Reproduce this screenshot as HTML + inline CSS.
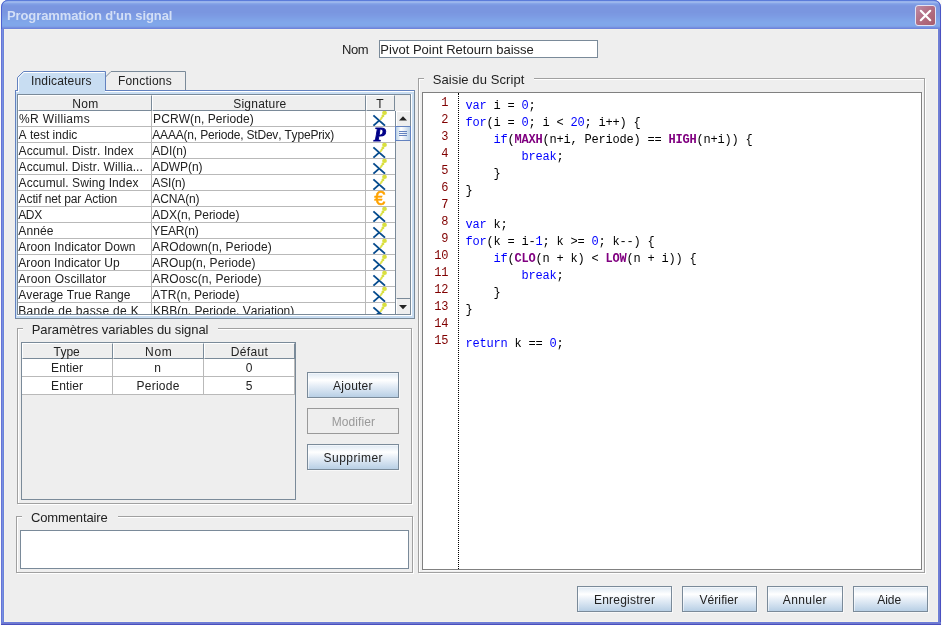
<!DOCTYPE html>
<html lang="fr">
<head>
<meta charset="utf-8">
<title>Programmation d'un signal</title>
<style>
html,body{margin:0;padding:0;}
body{width:942px;height:625px;overflow:hidden;background:#fbfbfb;font-family:"Liberation Sans",sans-serif;font-size:12px;color:#222;position:relative;font-kerning:none;}
.abs{position:absolute;box-sizing:border-box;}
#win{left:1px;top:0;width:940px;height:625px;border-radius:7px 7px 0 0;overflow:hidden;background:linear-gradient(to right,#6673d5 0px,#6673d5 1px,#7791e2 1px,#7791e2 2px,#6c82da 2px,#6c82da 937px,#6f7fd6 937px,#6f7fd6 938px,#6f7cd2 938px,#6f7cd2 939px,#4a50c0 939px);}
#titlebar{left:0;top:0;width:940px;height:29px;background:linear-gradient(to bottom,#5f82dc 0.5px,#98b2ec 1.5px,#9bb6ec 2.5px,#87a5e8 3.5px,#7f9de4 4.5px,#7b98e2 5.5px,#7a96e0 6.5px,#7a96e0 7.5px,#7a96e0 8.5px,#7a96e0 9.5px,#7a96e0 10.5px,#7a96e0 11.5px,#7a96e0 12.5px,#7b98e1 13.5px,#7b99e2 14.5px,#7c9ae3 15.5px,#7d9ce4 16.5px,#7d9ee5 17.5px,#7ea0e6 18.5px,#7fa2e7 19.5px,#7fa4e8 20.5px,#80a5e9 21.5px,#80a7ea 22.5px,#80a7ea 23.5px,#80a7ea 24.5px,#80a6e9 25.5px,#7ea0e6 26.5px,#7691e0 27.5px,#6e85db 28.5px);}
#titlebar{border-radius:7px 7px 0 0;box-shadow:inset 1px 0 0 #4d62cf,inset -1px 0 0 #4a56c6,inset 0 1px 0 #5b7cda;}
#tbl{display:none;}
#tbr{display:none;}
#botb{left:0;top:622px;width:940px;height:3px;background:linear-gradient(to bottom,#6b7cd9 0px,#6b7cd9 1px,#7079cd 1px,#7079cd 2px,#4a4fbf 2px);}
#title{will-change:transform;left:6px;top:8px;color:#d3dff6;font-weight:bold;font-size:13px;line-height:16px;letter-spacing:-0.1px;white-space:nowrap;}
#close{left:914px;top:5px;width:21px;height:21px;border:1px solid #e3e3f4;border-radius:3px;background:linear-gradient(135deg,#bd8ca6 0%,#b36f84 45%,#a85c6c 100%);}
#content{left:3px;top:29px;width:934px;height:593px;background:#eeeeee;border:1px solid #f4f2ea;}
.lbl{white-space:pre;line-height:14px;height:14px;color:#222;}
.l13{font-size:13px;line-height:15px;height:15px;}
.tf{background:#fff;border:1px solid #7a8a99;}
.btn{border:1px solid #7a8a99;background:linear-gradient(to bottom,#dde8f3 0%,#ffffff 30%,#e9f0f8 50%,#b8cfe5 100%);box-shadow:1px 1px 0 #f8f8f8, inset 1px 1px 0 rgba(255,255,255,.55);}
.btn.dis{background:#eeeeee;border-color:#999;box-shadow:none;}
.btn.dis .lbl{color:#999999;}
/* titled (etched) border: dark outer, white inner offset by 1 */
.tb{border:1px solid #a0a0a0;box-shadow:1px 1px 0 #fff, inset 1px 1px 0 #fff;}
.gap{background:#eeeeee;height:2px;}
/* table */
.hd{background:#eeeeee;border-right:1px solid #7a8a99;border-bottom:1px solid #7a8a99;border-left:1px solid #fff;border-top:1px solid #fff;}
.gl{background:#b9b9b9;}
.ic{position:absolute;}
.icp{font-family:"Liberation Serif",serif;font-weight:bold;font-style:italic;font-size:19.5px;line-height:16px;color:#000088;-webkit-text-stroke:0.9px #000088;}
.ice{font-family:"Liberation Sans",sans-serif;font-weight:normal;font-size:20px;line-height:16px;color:#ffa300;-webkit-text-stroke:0.5px #ffa300;}
/* code */
#code{font-family:"Liberation Mono",monospace;font-size:12px;letter-spacing:-0.2px;color:#000;}
.ln{position:absolute;left:0;width:25.2px;text-align:right;color:#800000;height:17px;line-height:17px;white-space:pre;}
.cl{position:absolute;left:42.5px;height:17px;line-height:17px;white-space:pre;}
.k{color:#0000ff;}
.f{color:#800080;font-weight:bold;}
.n{color:#0000ff;}
</style>
</head>
<body>
<div id="win" class="abs">
<div id="titlebar" class="abs"></div><div id="tbl" class="abs"></div><div id="tbr" class="abs"></div><div id="botb" class="abs"></div>
<div id="title" class="abs">Programmation d'un signal</div>
<div id="close" class="abs"><svg width="19" height="19" viewBox="0 0 19 19" style="position:absolute;left:0;top:0"><path d="M4.8 4.8 L14.2 14.2 M14.2 4.8 L4.8 14.2" stroke="#fff" stroke-width="2.2" stroke-linecap="round"/></svg></div>
<div id="content" class="abs"></div>
</div>
<div id="ui" class="abs" style="left:0;top:0;width:942px;height:625px;will-change:transform;">
<div class="abs lbl l13" style="left:341.9px;top:42px;letter-spacing:-0.374px;">Nom</div>
<div class="abs tf" style="left:379px;top:40px;width:219px;height:18px;"></div>
<div class="abs lbl l13" style="left:380.3px;top:42px;letter-spacing:0.012px;">Pivot Point Retourn baisse</div>
<div class="abs" style="left:15px;top:90px;width:400px;height:229px;border:1px solid #7a8a99;border-left-color:#6382bf;border-top-color:#6382bf;background:#c8ddf2;"></div>
<div class="abs" style="left:16px;top:91px;width:398px;height:1px;background:#fff;"></div>
<div class="abs" style="left:17px;top:315px;width:395px;height:1px;background:#fff;"></div>
<div class="abs" style="left:411px;top:94px;width:1px;height:222px;background:#fff;"></div>
<svg class="abs" style="left:15px;top:70px;" width="180" height="23" viewBox="0 0 180 23"><path d="M90.5 20 L90.5 7 L96 1.5 L170.5 1.5 L170.5 20" fill="#eeeeee" stroke="#7a8a99" stroke-width="1"/><path d="M2.5 21 L2.5 7.5 L8.5 1.5 L90.5 1.5 L90.5 21" fill="#c8ddf2" stroke="#6382bf" stroke-width="1"/><path d="M3.5 22 L3.5 8 L9 2.5 L89.5 2.5" fill="none" stroke="#fff" stroke-width="1"/><rect x="4" y="20" width="86" height="2" fill="#c8ddf2"/></svg>
<div class="abs lbl" style="left:31.0px;top:74px;letter-spacing:0.170px;">Indicateurs</div>
<div class="abs lbl" style="left:117.9px;top:74px;letter-spacing:0.222px;">Fonctions</div>
<div class="abs" style="left:17px;top:94px;width:394px;height:221px;border:1px solid #7a8a99;background:#fff;"></div>
<div class="abs" style="left:18px;top:95px;width:392px;height:16px;background:#eeeeee;"></div>
<div class="abs hd" style="left:18px;top:95px;width:134px;height:16px;"></div>
<div class="abs hd" style="left:152px;top:95px;width:214px;height:16px;"></div>
<div class="abs hd" style="left:366px;top:95px;width:29px;height:16px;"></div>
<div class="abs lbl" style="left:72.2px;top:97px;letter-spacing:0.382px;">Nom</div>
<div class="abs lbl" style="left:233.3px;top:97px;letter-spacing:0.204px;">Signature</div>
<div class="abs lbl" style="left:376.3px;top:97px;letter-spacing:0.670px;">T</div>
<div class="abs gl" style="left:151px;top:111px;width:1px;height:203px;"></div>
<div class="abs gl" style="left:365px;top:111px;width:1px;height:203px;"></div>
<div class="abs gl" style="left:18px;top:126px;width:377px;height:1px;"></div>
<div class="abs gl" style="left:18px;top:142px;width:377px;height:1px;"></div>
<div class="abs gl" style="left:18px;top:158px;width:377px;height:1px;"></div>
<div class="abs gl" style="left:18px;top:174px;width:377px;height:1px;"></div>
<div class="abs gl" style="left:18px;top:190px;width:377px;height:1px;"></div>
<div class="abs gl" style="left:18px;top:206px;width:377px;height:1px;"></div>
<div class="abs gl" style="left:18px;top:222px;width:377px;height:1px;"></div>
<div class="abs gl" style="left:18px;top:238px;width:377px;height:1px;"></div>
<div class="abs gl" style="left:18px;top:254px;width:377px;height:1px;"></div>
<div class="abs gl" style="left:18px;top:270px;width:377px;height:1px;"></div>
<div class="abs gl" style="left:18px;top:286px;width:377px;height:1px;"></div>
<div class="abs gl" style="left:18px;top:302px;width:377px;height:1px;"></div>
<div class="abs" style="left:18px;top:111px;width:377px;height:203px;overflow:hidden;">
<div class="abs lbl" style="left:1.1px;top:1px;letter-spacing:0.327px;">%R Williams</div>
<div class="abs lbl" style="left:135.1px;top:1px;letter-spacing:0.083px;">PCRW(n, Periode)</div>
<svg style="left:354.0px;top:-1px" class="ic" width="16" height="16" viewBox="0 0 16 16"><path d="M1.4 5.4 L13.0 15.6 M1.4 15.6 L7.4 10.4" stroke="#064b8e" stroke-width="1.9" fill="none"/><g fill="#d9df3e"><circle cx="8.7" cy="9.3" r="1.0"/><circle cx="9.7" cy="7.8" r="1.15"/><circle cx="10.9" cy="5.9" r="1.45"/><ellipse cx="12.5" cy="2.9" rx="2.4" ry="2.1"/></g></svg>
<div class="abs lbl" style="left:0.6px;top:17px;letter-spacing:0.001px;">A test indic</div>
<div class="abs lbl" style="left:134.3px;top:17px;letter-spacing:-0.190px;">AAAA(n, Periode, StDev, TypePrix)</div>
<span style="left:355.8px;top:16px" class="ic icp">P</span>
<div class="abs lbl" style="left:0.6px;top:33px;letter-spacing:0.082px;">Accumul. Distr. Index</div>
<div class="abs lbl" style="left:134.3px;top:33px;letter-spacing:-0.034px;">ADI(n)</div>
<svg style="left:354.0px;top:31px" class="ic" width="16" height="16" viewBox="0 0 16 16"><path d="M1.4 5.4 L13.0 15.6 M1.4 15.6 L7.4 10.4" stroke="#064b8e" stroke-width="1.9" fill="none"/><g fill="#d9df3e"><circle cx="8.7" cy="9.3" r="1.0"/><circle cx="9.7" cy="7.8" r="1.15"/><circle cx="10.9" cy="5.9" r="1.45"/><ellipse cx="12.5" cy="2.9" rx="2.4" ry="2.1"/></g></svg>
<div class="abs lbl" style="left:0.6px;top:49px;letter-spacing:0.063px;">Accumul. Distr. Willia...</div>
<div class="abs lbl" style="left:134.3px;top:49px;letter-spacing:-0.078px;">ADWP(n)</div>
<svg style="left:354.0px;top:47px" class="ic" width="16" height="16" viewBox="0 0 16 16"><path d="M1.4 5.4 L13.0 15.6 M1.4 15.6 L7.4 10.4" stroke="#064b8e" stroke-width="1.9" fill="none"/><g fill="#d9df3e"><circle cx="8.7" cy="9.3" r="1.0"/><circle cx="9.7" cy="7.8" r="1.15"/><circle cx="10.9" cy="5.9" r="1.45"/><ellipse cx="12.5" cy="2.9" rx="2.4" ry="2.1"/></g></svg>
<div class="abs lbl" style="left:0.6px;top:65px;letter-spacing:0.092px;">Accumul. Swing Index</div>
<div class="abs lbl" style="left:134.3px;top:65px;letter-spacing:-0.162px;">ASI(n)</div>
<svg style="left:354.0px;top:63px" class="ic" width="16" height="16" viewBox="0 0 16 16"><path d="M1.4 5.4 L13.0 15.6 M1.4 15.6 L7.4 10.4" stroke="#064b8e" stroke-width="1.9" fill="none"/><g fill="#d9df3e"><circle cx="8.7" cy="9.3" r="1.0"/><circle cx="9.7" cy="7.8" r="1.15"/><circle cx="10.9" cy="5.9" r="1.45"/><ellipse cx="12.5" cy="2.9" rx="2.4" ry="2.1"/></g></svg>
<div class="abs lbl" style="left:0.6px;top:81px;letter-spacing:-0.106px;">Actif net par Action</div>
<div class="abs lbl" style="left:134.3px;top:81px;letter-spacing:-0.118px;">ACNA(n)</div>
<span style="left:356.3px;top:79px" class="ic ice">€</span>
<div class="abs lbl" style="left:0.2px;top:97px;letter-spacing:-0.337px;">ADX</div>
<div class="abs lbl" style="left:134.3px;top:97px;letter-spacing:-0.012px;">ADX(n, Periode)</div>
<svg style="left:354.0px;top:95px" class="ic" width="16" height="16" viewBox="0 0 16 16"><path d="M1.4 5.4 L13.0 15.6 M1.4 15.6 L7.4 10.4" stroke="#064b8e" stroke-width="1.9" fill="none"/><g fill="#d9df3e"><circle cx="8.7" cy="9.3" r="1.0"/><circle cx="9.7" cy="7.8" r="1.15"/><circle cx="10.9" cy="5.9" r="1.45"/><ellipse cx="12.5" cy="2.9" rx="2.4" ry="2.1"/></g></svg>
<div class="abs lbl" style="left:0.3px;top:113px;letter-spacing:0.125px;">Année</div>
<div class="abs lbl" style="left:134.3px;top:113px;letter-spacing:-0.157px;">YEAR(n)</div>
<svg style="left:354.0px;top:111px" class="ic" width="16" height="16" viewBox="0 0 16 16"><path d="M1.4 5.4 L13.0 15.6 M1.4 15.6 L7.4 10.4" stroke="#064b8e" stroke-width="1.9" fill="none"/><g fill="#d9df3e"><circle cx="8.7" cy="9.3" r="1.0"/><circle cx="9.7" cy="7.8" r="1.15"/><circle cx="10.9" cy="5.9" r="1.45"/><ellipse cx="12.5" cy="2.9" rx="2.4" ry="2.1"/></g></svg>
<div class="abs lbl" style="left:0.3px;top:129px;letter-spacing:0.090px;">Aroon Indicator Down</div>
<div class="abs lbl" style="left:134.3px;top:129px;letter-spacing:0.112px;">AROdown(n, Periode)</div>
<svg style="left:354.0px;top:127px" class="ic" width="16" height="16" viewBox="0 0 16 16"><path d="M1.4 5.4 L13.0 15.6 M1.4 15.6 L7.4 10.4" stroke="#064b8e" stroke-width="1.9" fill="none"/><g fill="#d9df3e"><circle cx="8.7" cy="9.3" r="1.0"/><circle cx="9.7" cy="7.8" r="1.15"/><circle cx="10.9" cy="5.9" r="1.45"/><ellipse cx="12.5" cy="2.9" rx="2.4" ry="2.1"/></g></svg>
<div class="abs lbl" style="left:0.3px;top:145px;letter-spacing:0.073px;">Aroon Indicator Up</div>
<div class="abs lbl" style="left:134.3px;top:145px;letter-spacing:0.066px;">AROup(n, Periode)</div>
<svg style="left:354.0px;top:143px" class="ic" width="16" height="16" viewBox="0 0 16 16"><path d="M1.4 5.4 L13.0 15.6 M1.4 15.6 L7.4 10.4" stroke="#064b8e" stroke-width="1.9" fill="none"/><g fill="#d9df3e"><circle cx="8.7" cy="9.3" r="1.0"/><circle cx="9.7" cy="7.8" r="1.15"/><circle cx="10.9" cy="5.9" r="1.45"/><ellipse cx="12.5" cy="2.9" rx="2.4" ry="2.1"/></g></svg>
<div class="abs lbl" style="left:0.3px;top:161px;letter-spacing:0.176px;">Aroon Oscillator</div>
<div class="abs lbl" style="left:134.3px;top:161px;letter-spacing:0.113px;">AROosc(n, Periode)</div>
<svg style="left:354.0px;top:159px" class="ic" width="16" height="16" viewBox="0 0 16 16"><path d="M1.4 5.4 L13.0 15.6 M1.4 15.6 L7.4 10.4" stroke="#064b8e" stroke-width="1.9" fill="none"/><g fill="#d9df3e"><circle cx="8.7" cy="9.3" r="1.0"/><circle cx="9.7" cy="7.8" r="1.15"/><circle cx="10.9" cy="5.9" r="1.45"/><ellipse cx="12.5" cy="2.9" rx="2.4" ry="2.1"/></g></svg>
<div class="abs lbl" style="left:0.3px;top:177px;letter-spacing:0.047px;">Average True Range</div>
<div class="abs lbl" style="left:134.3px;top:177px;letter-spacing:0.036px;">ATR(n, Periode)</div>
<svg style="left:354.0px;top:175px" class="ic" width="16" height="16" viewBox="0 0 16 16"><path d="M1.4 5.4 L13.0 15.6 M1.4 15.6 L7.4 10.4" stroke="#064b8e" stroke-width="1.9" fill="none"/><g fill="#d9df3e"><circle cx="8.7" cy="9.3" r="1.0"/><circle cx="9.7" cy="7.8" r="1.15"/><circle cx="10.9" cy="5.9" r="1.45"/><ellipse cx="12.5" cy="2.9" rx="2.4" ry="2.1"/></g></svg>
<div class="abs lbl" style="left:0.3px;top:193px;letter-spacing:0.312px;">Bande de basse de K<span style="position:relative;top:1px">...</span></div>
<div class="abs lbl" style="left:135.1px;top:193px;letter-spacing:0.019px;">KBB(n, Periode, Variation)</div>
<svg style="left:354.0px;top:191px" class="ic" width="16" height="16" viewBox="0 0 16 16"><path d="M1.4 5.4 L13.0 15.6 M1.4 15.6 L7.4 10.4" stroke="#064b8e" stroke-width="1.9" fill="none"/><g fill="#d9df3e"><circle cx="8.7" cy="9.3" r="1.0"/><circle cx="9.7" cy="7.8" r="1.15"/><circle cx="10.9" cy="5.9" r="1.45"/><ellipse cx="12.5" cy="2.9" rx="2.4" ry="2.1"/></g></svg>
</div>
<div class="abs" style="left:395px;top:111px;width:15px;height:203px;background:#eeeeee;border-left:1px solid #7a8a99;">
<div class="abs" style="left:0;top:0;width:14px;height:15px;border-left:1px solid #fff;border-top:1px solid #fff;background:#eeeeee;"><svg width="14" height="14" style="position:absolute;left:-1px;top:-1px"><path d="M3 9.5 L11 9.5 L7 5.3 Z" fill="#222"/></svg></div>
<div class="abs" style="left:-1px;top:15px;width:16px;height:15px;border:1px solid #6382bf;background:linear-gradient(to right,#b8cfe5 0%,#ffffff 35%,#e6eef7 60%,#b8cfe5 100%);"><div class="abs" style="left:3px;top:4px;width:8px;height:1px;background:#6382bf;box-shadow:0 2px 0 #6382bf,0 4px 0 #6382bf;"></div></div>
<div class="abs" style="left:0;top:187px;width:14px;height:16px;border-left:1px solid #fff;border-top:1px solid #7a8a99;background:#eeeeee;"><svg width="14" height="14" style="position:absolute;left:-1px;top:0px"><path d="M3 6 L11 6 L7 10.2 Z" fill="#222"/></svg></div>
</div>
<div class="abs tb" style="left:17px;top:328px;width:395px;height:176px;"></div>
<div class="abs gap" style="left:23px;top:328px;width:195px;"></div>
<div class="abs lbl l13" style="left:31.7px;top:322px;letter-spacing:-0.058px;">Paramètres variables du signal</div>
<div class="abs" style="left:21px;top:342px;width:275px;height:158px;border:1px solid #7a8a99;background:#eeeeee;"></div>
<div class="abs hd" style="left:22px;top:343px;width:91px;height:16px;"></div>
<div class="abs hd" style="left:113px;top:343px;width:91px;height:16px;"></div>
<div class="abs hd" style="left:204px;top:343px;width:91px;height:16px;"></div>
<div class="abs" style="left:22px;top:359px;width:273px;height:36px;background:#fff;"></div>
<div class="abs gl" style="left:22px;top:376px;width:273px;height:1px;"></div>
<div class="abs gl" style="left:22px;top:394px;width:273px;height:1px;"></div>
<div class="abs gl" style="left:112px;top:359px;width:1px;height:36px;"></div>
<div class="abs gl" style="left:203px;top:359px;width:1px;height:36px;"></div>
<div class="abs gl" style="left:294px;top:359px;width:1px;height:36px;"></div>
<div class="abs lbl" style="left:53.4px;top:345px;letter-spacing:-0.126px;">Type</div>
<div class="abs lbl" style="left:145.1px;top:345px;letter-spacing:0.632px;">Nom</div>
<div class="abs lbl" style="left:230.7px;top:345px;letter-spacing:0.349px;">Défaut</div>
<div class="abs lbl" style="left:51.1px;top:361px;letter-spacing:0.130px;">Entier</div>
<div class="abs lbl" style="left:154.3px;top:361px;letter-spacing:0.526px;">n</div>
<div class="abs lbl" style="left:245.8px;top:361px;letter-spacing:0.526px;">0</div>
<div class="abs lbl" style="left:51.1px;top:379px;letter-spacing:0.130px;">Entier</div>
<div class="abs lbl" style="left:136.5px;top:379px;letter-spacing:0.256px;">Periode</div>
<div class="abs lbl" style="left:245.8px;top:379px;letter-spacing:0.526px;">5</div>
<div class="abs btn" style="left:307px;top:372px;width:92px;height:26px;"></div>
<div class="abs btn dis" style="left:307px;top:408px;width:92px;height:26px;"><div class="abs lbl" style="left:23.8px;top:6px;letter-spacing:0.074px;">Modifier</div></div>
<div class="abs btn" style="left:307px;top:444px;width:92px;height:26px;"></div>
<div class="abs lbl" style="left:333.1px;top:379px;letter-spacing:0.230px;">Ajouter</div>
<div class="abs lbl" style="left:323.6px;top:451px;letter-spacing:0.443px;">Supprimer</div>
<div class="abs tb" style="left:16px;top:516px;width:397px;height:57px;"></div>
<div class="abs gap" style="left:22px;top:516px;width:96px;"></div>
<div class="abs lbl l13" style="left:31.0px;top:510px;letter-spacing:-0.133px;">Commentaire</div>
<div class="abs tf" style="left:20px;top:530px;width:389px;height:39px;"></div>
<div class="abs tb" style="left:418px;top:78px;width:507px;height:495px;"></div>
<div class="abs gap" style="left:424px;top:78px;width:110px;"></div>
<div class="abs lbl l13" style="left:432.8px;top:72px;letter-spacing:0.079px;">Saisie du Script</div>
<div id="code" class="abs" style="left:422px;top:92px;width:500px;height:478px;border:1px solid #808080;background:#fff;overflow:hidden;box-shadow:1px 1px 0 #f8f8f8;">
<div class="abs" style="left:35px;top:0;width:0;height:476px;border-left:1px dotted #000;"></div>
<div class="ln" style="top:2px;">1</div><div class="cl" style="top:5px;"><span class="k">var</span> i = <span class="n">0</span>;</div>
<div class="ln" style="top:19px;">2</div><div class="cl" style="top:22px;"><span class="k">for</span>(i = <span class="n">0</span>; i &lt; <span class="n">20</span>; i++) {</div>
<div class="ln" style="top:36px;">3</div><div class="cl" style="top:39px;">    <span class="k">if</span>(<span class="f">MAXH</span>(n+i, Periode) == <span class="f">HIGH</span>(n+i)) {</div>
<div class="ln" style="top:53px;">4</div><div class="cl" style="top:56px;">        <span class="k">break</span>;</div>
<div class="ln" style="top:70px;">5</div><div class="cl" style="top:73px;">    }</div>
<div class="ln" style="top:87px;">6</div><div class="cl" style="top:90px;">}</div>
<div class="ln" style="top:104px;">7</div><div class="cl" style="top:107px;"></div>
<div class="ln" style="top:121px;">8</div><div class="cl" style="top:124px;"><span class="k">var</span> k;</div>
<div class="ln" style="top:138px;">9</div><div class="cl" style="top:141px;"><span class="k">for</span>(k = i-<span class="n">1</span>; k &gt;= <span class="n">0</span>; k--) {</div>
<div class="ln" style="top:155px;">10</div><div class="cl" style="top:158px;">    <span class="k">if</span>(<span class="f">CLO</span>(n + k) &lt; <span class="f">LOW</span>(n + i)) {</div>
<div class="ln" style="top:172px;">11</div><div class="cl" style="top:175px;">        <span class="k">break</span>;</div>
<div class="ln" style="top:189px;">12</div><div class="cl" style="top:192px;">    }</div>
<div class="ln" style="top:206px;">13</div><div class="cl" style="top:209px;">}</div>
<div class="ln" style="top:223px;">14</div><div class="cl" style="top:226px;"></div>
<div class="ln" style="top:240px;">15</div><div class="cl" style="top:243px;"><span class="k">return</span> k == <span class="n">0</span>;</div>
</div>
<div class="abs btn" style="left:577px;top:586px;width:95px;height:26px;"></div>
<div class="abs btn" style="left:682px;top:586px;width:75px;height:26px;"></div>
<div class="abs btn" style="left:767px;top:586px;width:76px;height:26px;"></div>
<div class="abs btn" style="left:853px;top:586px;width:75px;height:26px;"></div>
<div class="abs lbl" style="left:593.9px;top:593px;letter-spacing:0.241px;">Enregistrer</div>
<div class="abs lbl" style="left:699.4px;top:593px;letter-spacing:0.099px;">Vérifier</div>
<div class="abs lbl" style="left:782.8px;top:593px;letter-spacing:0.390px;">Annuler</div>
<div class="abs lbl" style="left:877.2px;top:593px;letter-spacing:-0.006px;">Aide</div>
</div>
</body>
</html>
